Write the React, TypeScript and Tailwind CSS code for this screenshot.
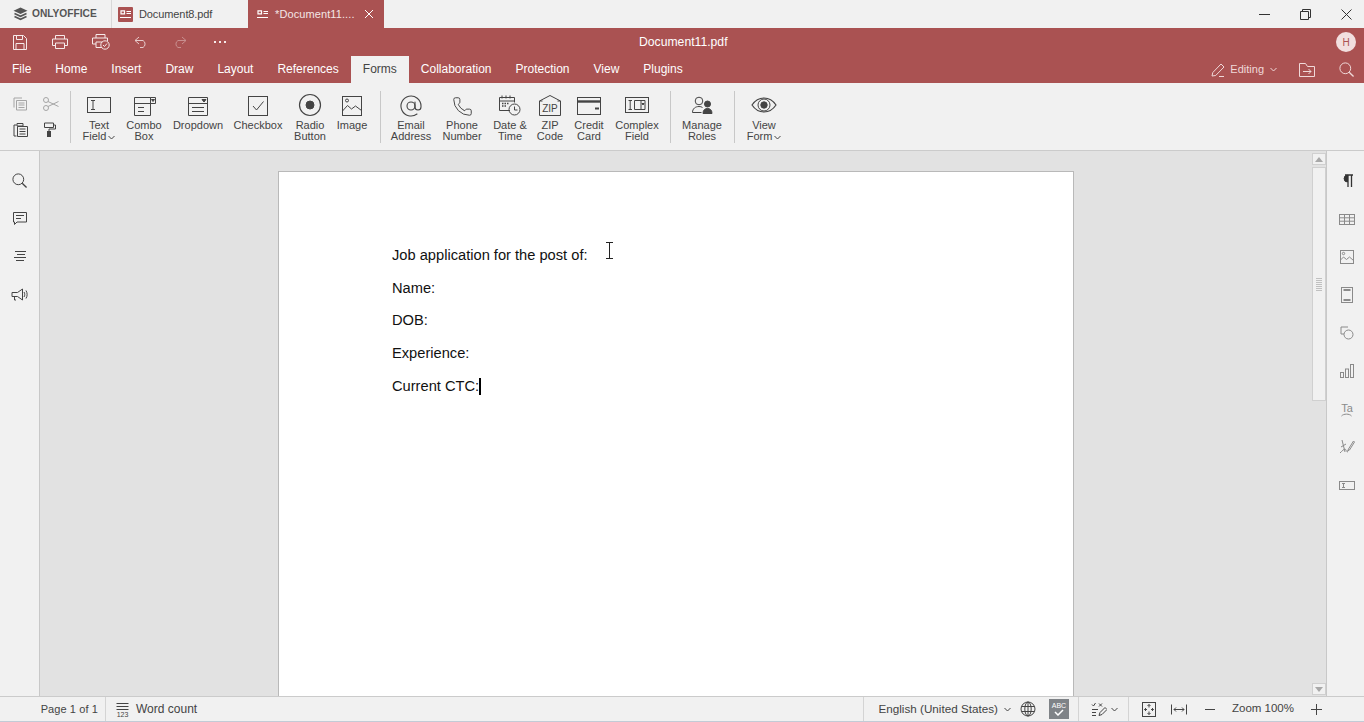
import React from "react";
import { AtSign, Phone } from "lucide-react";

const font = { fontFamily: '"Liberation Sans", Arial, sans-serif' };

// thin-stroke svg wrapper, coordinates are in px
const Ico = ({ w = 30, h = 26, className = "", children }: { w?: number; h?: number; className?: string; children: React.ReactNode }) => (
  <svg width={w} height={h} viewBox={`0 0 ${w} ${h}`} fill="none" stroke="currentColor" strokeWidth="1" className={className}>
    {children}
  </svg>
);

const Search = ({ s = 16 }: { s?: number }) => (
  <Ico w={s} h={s}>
    <circle cx={s * 0.42} cy={s * 0.42} r={s * 0.36} />
    <path d={`M${s * 0.68} ${s * 0.68}L${s * 0.97} ${s * 0.97}`} strokeWidth="1.3" />
  </Ico>
);

const Chevron = () => (
  <svg width="7" height="5" viewBox="0 0 7 5" fill="none" stroke="currentColor" className="shrink-0">
    <path d="M.5 1l3 3 3-3" />
  </svg>
);

const FormGlyph = ({ color }: { color: string }) => (
  <svg width="11" height="9" viewBox="0 0 11 9" fill="none" stroke={color} strokeWidth="1.2">
    <path d="M1 .8h3.500v3H1zM6.500 1.500H11M6.500 3.500H11M0 7.500h11" />
  </svg>
);

const tools = [
  {
    w: "w-[46px]", lines: ["Text", "Field"], caret: true,
    icon: <Ico><rect x="3.500" y="4.500" width="23" height="15" /><path d="M7 7.500h4M7 16.500h4M9 7.500v9" /></Ico>,
  },
  {
    w: "w-[44px]", lines: ["Combo", "Box"],
    icon: <Ico><path d="M5.500 4.500h16v18h-16zM21.500 4.500h5v6h-5zM5.500 10.500h16M9 14.500h6M9 18.500h6" /><path d="M22.500 6.500h3l-1.500 2z" fill="currentColor" /></Ico>,
  },
  {
    w: "w-[64px]", lines: ["Dropdown"],
    icon: <Ico><path d="M5.500 4.500h19v18h-19zM5.500 10.500h19M9 14.500h12M9 18.500h12" /><path d="M19 6.500h4l-2 2.500z" fill="currentColor" /></Ico>,
  },
  {
    w: "w-[56px]", lines: ["Checkbox"],
    icon: <Ico><rect x="5.500" y="3.500" width="19" height="19" /><path d="M10 13l3.500 4 7-8.500" /></Ico>,
  },
  {
    w: "w-[48px]", lines: ["Radio", "Button"],
    icon: <Ico><circle cx="15" cy="12" r="10.500" strokeWidth="1.200" /><circle cx="15" cy="12" r="4" fill="currentColor" /></Ico>,
  },
  {
    w: "w-[36px]", lines: ["Image"],
    icon: <Ico><rect x="5.500" y="3.500" width="19" height="19" /><circle cx="10" cy="7.500" r="1.500" /><path d="M5.500 18l5-5.500 4 3.500 4-3 6 4.500" /></Ico>,
  },
  { divider: "w-[10px]" },
  {
    w: "w-[42px]", lines: ["Email", "Address"],
    icon: <AtSign size={24} strokeWidth={1.1} />,
  },
  {
    w: "w-[60px]", lines: ["Phone", "Number"],
    icon: <Phone size={21} strokeWidth={1.1} />,
  },
  {
    w: "w-[36px]", lines: ["Date &", "Time"],
    icon: (
      <Ico>
        <path d="M15 17.500H4.500v-13h15v5" />
        <path d="M4.500 8h15M7 2.500v3M11 2.500v3M15 2.500v3" />
        <path d="M7 10.500h7M7 13h5" strokeDasharray="1.500 1" strokeWidth="1.500" />
        <circle cx="19.500" cy="16.500" r="5.500" />
        <path d="M19.500 13.500v3.500h3" />
      </Ico>
    ),
  },
  {
    w: "w-[44px]", lines: ["ZIP", "Code"],
    icon: (
      <Ico>
        <path d="M4.500 8l10.500-5.500 10.500 5.500v14.500h-21zM4.500 8h3M25.500 8h-3" />
        <text x="15" y="19" textAnchor="middle" fontSize="10" fill="currentColor" stroke="none" style={font}>ZIP</text>
      </Ico>
    ),
  },
  {
    w: "w-[34px]", lines: ["Credit", "Card"],
    icon: <Ico><rect x="3.500" y="4.500" width="23" height="17" /><path d="M3.500 8.500h23" strokeWidth="2.400" /><path d="M21 15.500h4" strokeWidth="2" /></Ico>,
  },
  {
    w: "w-[62px]", lines: ["Complex", "Field"],
    icon: (
      <Ico>
        <rect x="3.500" y="4.500" width="23" height="15" />
        <path d="M6.500 7.500h3.500M6.500 16.500h3.500M8.200 7.500v9M12.500 7.500h10.500v9H12.500zM19 7.500v9" />
        <path d="M20 10.500h2l-1 1.500z" fill="currentColor" />
      </Ico>
    ),
  },
  { divider: "w-[2px]" },
  {
    w: "w-[44px]", lines: ["Manage", "Roles"],
    icon: (
      <Ico>
        <circle cx="12" cy="8" r="3.800" />
        <path d="M5.500 19.500c0-4 3-6 6.500-6 1.500 0 2.500.3 3.500 1M5.500 19.500h9" />
        <circle cx="20.500" cy="11" r="3" fill="currentColor" />
        <path d="M16 20.500c0-3.500 2-5 4.500-5s4.500 1.500 4.500 5z" fill="currentColor" />
      </Ico>
    ),
  },
  { divider: "w-[10px]" },
  {
    w: "w-[40px]", lines: ["View", "Form"], caret: true,
    icon: (
      <Ico>
        <path d="M3 12c3-4.500 7-7 12-7s9 2.500 12 7c-3 4.500-7 7-12 7s-9-2.500-12-7z" strokeWidth="1.200" />
        <circle cx="15" cy="12" r="6" />
        <circle cx="15" cy="12" r="3.200" fill="currentColor" />
      </Ico>
    ),
  },
];

const menu = ["File", "Home", "Insert", "Draw", "Layout", "References", "Forms", "Collaboration", "Protection", "View", "Plugins"];

const leftIcons = [
  <Search s={15} />,
  <Ico w={16} h={15}><path d="M1.500 1.500h13v9.500H5l-2.500 2.500V11h-1zM4 4.500h8M4 7.500h5" /></Ico>,
  <Ico w={14} h={13}><path d="M2 1.500h11M4 4.500h8M1 7.500h12M3 10.500h8" /></Ico>,
  <Ico w={17} h={15}>
    <path d="M1 5.500h5.500L11.500 2v11L6.500 9.500H1zM3.500 9.500v3.500h1.500" />
    <path d="M13 5c1 1.500 1 3.500 0 5M15 3.500c1.500 2.500 1.500 5.500 0 8" />
  </Ico>,
];

const rightIcons = [
  <Ico w={14} h={14}><path d="M8 1v12M11.500 1v12M5 1h8" strokeWidth="1.300" /><path d="M7.500 1.200a3.300 3.300 0 0 0 0 6.800z" fill="currentColor" /></Ico>,
  <Ico w={16} h={11}><rect x=".5" y=".5" width="15" height="10" /><path d="M.5 3.800h15M.5 7.200h15M5.500 .5v10M10.500 .5v10" /></Ico>,
  <Ico w={14} h={14}><rect x=".5" y=".5" width="13" height="13" /><circle cx="3.500" cy="3.500" r="1.200" /><path d="M.5 10l3-3 3 2.500 3-2.500 4 3.500" /></Ico>,
  <Ico w={12} h={16}><rect x=".5" y=".5" width="11" height="15" /><path d="M2.500 3h7M2.500 13h7" strokeWidth="2" /></Ico>,
  <Ico w={14} h={14}><path d="M8 1H1v7h3" /><circle cx="8.500" cy="8.500" r="4.500" /></Ico>,
  <Ico w={14} h={14}><rect x=".5" y="8.500" width="3" height="5" /><rect x="5.500" y="5" width="3" height="8.500" /><rect x="10.500" y=".5" width="3" height="13" /></Ico>,
  <Ico w={16} h={16}>
    <text x="8" y="10.500" textAnchor="middle" fontSize="11" fill="currentColor" stroke="none" style={font}>Ta</text>
    <path d="M2.500 15c2-2.500 8-2.500 10 0" />
  </Ico>,
  <Ico w={16} h={16}><path d="M3 1l3 12M7 5L2 8M1 14c2-2 4-4 5-4s1 3 3 3M9.500 10l5-8 1 1-5 8-1.800 1z" /></Ico>,
  <Ico w={16} h={9}><rect x=".5" y=".5" width="15" height="8" /><path d="M3 2.500h3M3 6.500h3M4.500 2.500v4" /></Ico>,
];

const docLines = ["Job application for the post of:", "Name:", "DOB:", "Experience:"];

function ToolbarDivider() {
  return <div className="h-[52px] w-px shrink-0 self-start mt-[8px] bg-[#c8c8c8]" />;
}

export default function App() {
  return (
    <div className="flex h-[722px] w-[1364px] flex-col overflow-hidden bg-[#f1f1f1] text-[12px] text-[#444]" style={font}>
      {/* TITLE TABS */}
      <div className="flex h-[28px] shrink-0 items-center">
        <div className="flex h-full w-[112px] items-center border-r border-[#d8d8d8] pl-[13px] text-[#555]">
          <Ico w={15} h={14} className="shrink-0">
            <path d="M7.500 .5l7 3.200-7 3.200-7-3.200z" fill="currentColor" stroke="none" />
            <path d="M1.500 6.500l6 2.800 6-2.800M1.500 9.500l6 2.800 6-2.800" strokeWidth="1.600" />
          </Ico>
          <span className="ml-[4px] text-[10.200px] font-bold">ONLYOFFICE</span>
        </div>
        <div className="flex h-full w-[136px] items-center pl-[6px]">
          <span className="flex h-[15px] w-[15px] items-center justify-center rounded-[1px] bg-[#aa5252]">
            <FormGlyph color="#fff" />
          </span>
          <span className="ml-[6px] text-[11px] tracking-[-0.1px]">Document8.pdf</span>
        </div>
        <div className="flex h-full w-[136px] items-center bg-[#aa5252] pl-[9px] text-[#f4e6e6]">
          <FormGlyph color="#fff" />
          <span className="ml-[7px] text-[11px] tracking-[0.1px]">*Document11....</span>
          <svg width="10" height="10" viewBox="0 0 10 10" stroke="#fff" className="ml-[9px]"><path d="M1 1l8 8M9 1l-8 8" /></svg>
        </div>
        <div className="ml-auto flex items-center text-[#333]">
          <svg width="11" height="3" viewBox="0 0 11 3" stroke="currentColor" className="mr-[30px]"><path d="M0 1.500h11" /></svg>
          <Ico w={11} h={11} className="mr-[30px]"><path d="M.5 2.500h8v8h-8zM2.500 2.500v-2h8v8h-2" /></Ico>
          <svg width="11" height="11" viewBox="0 0 11 11" stroke="currentColor" className="mr-[12px]"><path d="M.5.5l10 10M10.500 .5l-10 10" /></svg>
        </div>
      </div>

      {/* HEADER */}
      <div className="flex h-[55px] shrink-0 flex-col bg-[#aa5252] text-[#f6eaea]">
        <div className="relative flex h-[28px] items-center">
          <div className="ml-[13px] flex items-center gap-[24px]">
            <Ico w={14} h={15}><path d="M.5.5h10l3 3v11H.5zM3.500 .5v4h6v-4M3 14.500V8.500h8v6" /></Ico>
            <Ico w={16} h={14} className="ml-[1px]"><path d="M3.500 4V.5h9V4M3.500 10.500H.5V4h15v6.500h-3M3.500 8h9v5.500h-9z" /></Ico>
            <Ico w={18} h={16}>
              <path d="M4 4V.5h9V4M4 10H.5V4h15v3M4 8h6v5.500H4z" />
              <circle cx="13" cy="11" r="4.200" fill="#aa5252" />
              <path d="M11 11l1.500 1.500 2.500-3" />
            </Ico>
            <Ico w={14} h={12} className="opacity-80"><path d="M5 1L1 4.500 5 8M1 4.500h8a4 4 0 0 1 0 7H6" /></Ico>
            <Ico w={14} h={12} className="ml-[1px] opacity-40"><path d="M9 1l4 3.500L9 8M13 4.500H5a4 4 0 0 0 0 7h3" /></Ico>
            <span className="ml-[3px] flex gap-[3px]">
              <i className="h-[2px] w-[2px] bg-[#f6eaea]" />
              <i className="h-[2px] w-[2px] bg-[#f6eaea]" />
              <i className="h-[2px] w-[2px] bg-[#f6eaea]" />
            </span>
          </div>
          <span className="absolute left-[639px] text-[12.200px] text-white">Document11.pdf</span>
          <span className="ml-auto mr-[8px] flex h-[20px] w-[20px] items-center justify-center rounded-full bg-[#f2dfdf] text-[10px] text-[#aa5252]">H</span>
        </div>
        <div className="flex h-[27px] items-stretch">
          {menu.map((m) =>
            m === "Forms" ? (
              <span key={m} className="flex items-center bg-[#f1f1f1] px-[12px] pb-[1px] text-[#444]">{m}</span>
            ) : (
              <span key={m} className="flex items-center px-[12px] pb-[1px] text-white">{m}</span>
            )
          )}
          <div className="ml-auto flex items-center text-[#f0d9d9]">
            <Ico w={14} h={14}><path d="M1 13l.8-3.500L10 1l3 3-8.300 8.500zM8 13.500h5" /></Ico>
            <span className="ml-[5px] text-[11px]">Editing</span>
            <span className="ml-[6px]"><Chevron /></span>
            <Ico w={16} h={14} className="ml-[22px]"><path d="M.5 13.500V.5h6l2 3h7v10zM4 8.500h8M9.500 6l2.500 2.500L9.500 11" /></Ico>
            <span className="ml-[24px] mr-[10px]"><Search s={15} /></span>
          </div>
        </div>
      </div>

      {/* TOOLBAR */}
      <div className="flex h-[68px] shrink-0 border-b border-[#cbcbcb]">
        <div className="grid h-full w-[70px] shrink-0 grid-cols-[30px_27px] content-start gap-y-[11px] pl-[13px] pt-[14px]">
          <Ico w={15} h={14} className="text-[#a5a5a5]"><path d="M1 10.500V1h8M3.500 13V3.500h10V13zM5.500 6h6M5.500 8h6M5.500 10.500h6" /></Ico>
          <Ico w={16} h={14} className="text-[#a5a5a5]"><circle cx="3" cy="3" r="2.500" /><circle cx="3" cy="11" r="2.500" /><path d="M5 4.500l10.500 5M5 9.500L15.500 4.500" /></Ico>
          <Ico w={15} h={15}><path d="M3.500 3H1v11h2.500M4 1.500h6V4H4zM4.500 4.500h10V14.500h-10zM6.500 7h6M6.500 9.500h6M6.500 12h6" /></Ico>
          <Ico w={14} h={15}><path d="M1.500 1h9v4.500h-9zM10.500 3h2v4H6v2.500" /><rect x="4.500" y="9.500" width="3" height="5" fill="currentColor" /></Ico>
        </div>
        <ToolbarDivider />
        <div className="w-[5px] shrink-0" />
        {tools.map((t, i) =>
          t.divider ? (
            <React.Fragment key={i}>
              <div className={`${t.divider} shrink-0`} />
              <ToolbarDivider />
              <div className="w-[9px] shrink-0" />
            </React.Fragment>
          ) : (
            <div key={i} className={`${t.w} flex shrink-0 flex-col items-center pt-[10px]`}>
              <div className="flex h-[26px] items-center justify-center text-[#444]">{t.icon}</div>
              <div className="mt-[1px] flex flex-col items-center text-[11px] leading-[11px] text-[#444]">
                {t.lines!.map((l, j) => (
                  <span key={l} className="flex items-center whitespace-nowrap">
                    {l}
                    {t.caret && j === 1 && <span className="ml-[2px] mt-[2px]"><Chevron /></span>}
                  </span>
                ))}
              </div>
            </div>
          )
        )}
      </div>

      {/* MAIN */}
      <div className="flex min-h-0 flex-1">
        <div className="flex w-[40px] shrink-0 flex-col items-center border-r border-[#c8c8c8] pt-[10px] text-[#444]">
          {leftIcons.map((ic, i) => (
            <div key={i} className="flex h-[38px] items-center justify-center">{ic}</div>
          ))}
        </div>
        <div className="flex min-w-0 flex-1 bg-[#e2e2e2]">
          <div className="relative ml-[238px] mt-[20px] h-[525px] w-[796px] shrink-0 border-x border-t border-[#b9b9b9] bg-white pl-[113px] pt-[67px] text-[14.670px] leading-[32.700px] text-[#111]">
            {docLines.map((l) => (
              <div key={l}>{l}</div>
            ))}
            <div className="flex items-center">
              Current CTC:
              <span className="inline-block h-[17px] w-[2px] bg-black" />
            </div>
            {/* mouse cursor */}
            <svg width="9" height="17" viewBox="0 0 9 17" fill="none" stroke="#222" className="absolute left-[326px] top-[70px]">
              <path d="M1 .5h7M1 16.500h7M4.500 .5v16" />
            </svg>
          </div>
          <div className="ml-[238px] flex w-[14px] shrink-0 flex-col pt-[2px] pb-[1px]">
            <div className="flex h-[12px] items-center justify-center border border-[#d0d0d0] bg-[#f1f1f1]">
              <svg width="8" height="5" viewBox="0 0 8 5"><path d="M4 0l4 5H0z" fill="#a8a8a8" /></svg>
            </div>
            <div className="mt-[2px] flex h-[234px] items-center justify-center border border-[#d0d0d0] bg-[#f1f1f1] pt-[1px]">
              <div className="h-[13px] w-[6px] bg-[repeating-linear-gradient(to_bottom,#c0c0c0_0,#c0c0c0_1px,transparent_1px,transparent_2px)]" />
            </div>
            <div className="mt-auto flex h-[12px] items-center justify-center border border-[#d0d0d0] bg-[#f1f1f1]">
              <svg width="8" height="5" viewBox="0 0 8 5"><path d="M0 0h8L4 5z" fill="#a8a8a8" /></svg>
            </div>
          </div>
        </div>
        <div className="flex w-[38px] shrink-0 flex-col items-center border-l border-[#c8c8c8] pl-[3px] pt-[11px] text-[#8a8a8a]">
          {rightIcons.map((ic, i) => (
            <div key={i} className={`flex h-[38px] items-center justify-center ${i === 0 ? "text-[#333]" : ""}`}>{ic}</div>
          ))}
        </div>
      </div>

      {/* STATUS BAR */}
      <div className="flex h-[26px] shrink-0 items-center border-y border-t-[#cbcbcb] border-b-[#c3cbd6]">
        <div className="flex h-full w-[106px] items-center justify-end border-r border-[#d4d4d4] pr-[7px] text-[11px] tracking-[0.1px]">Page 1 of 1</div>
        <Ico w={13} h={15} className="ml-[10px]">
          <path d="M.5 1.500h12M.5 4.500h12M.5 7.500h12" />
          <text x="6.500" y="14.500" textAnchor="middle" fontSize="7" fill="currentColor" stroke="none" style={font}>123</text>
        </Ico>
        <span className="ml-[7px]">Word count</span>
        <div className="ml-auto flex h-full items-center border-l border-[#d4d4d4] pl-[14px]">
          <span className="whitespace-nowrap text-[11.700px]">English (United States)</span>
          <span className="ml-[6px]"><Chevron /></span>
          <Ico w={16} h={16} className="ml-[9px]">
            <circle cx="8" cy="8" r="7" />
            <ellipse cx="8" cy="8" rx="3.200" ry="7" />
            <path d="M8 1v14M1.500 5.500h13M1.500 10.500h13" />
          </Ico>
          <span className="ml-[13px] flex h-[20px] w-[20px] flex-col items-center justify-center bg-[#7f8387] text-[7px] leading-[7px] text-white">
            ABC
            <svg width="11" height="7" viewBox="0 0 11 7" fill="none" stroke="#fff" strokeWidth="1.500"><path d="M2 3l3 3 5-5" /></svg>
          </span>
        </div>
        <div className="ml-[9px] flex h-full items-center border-l border-[#d4d4d4] pl-[12px]">
          <Ico w={16} h={15}>
            <path d="M1 2.500l1.500 1.500 2-3M8 1.500l3 3M11 1.500l-3 3M1 7.500h6M1 10.500h4M1 13.500h4M8 13.500l1-3 5-5 2 2-5 5z" />
          </Ico>
          <span className="ml-[4px] mr-[10px]"><Chevron /></span>
        </div>
        <div className="flex h-full items-center border-l border-[#d4d4d4] pl-[13px]">
          <Ico w={14} h={15}>
            <rect x=".5" y=".5" width="13" height="14" />
            <path d="M7 2.500v3M5.500 4L7 2.500 8.500 4M7 12.500v-3M5.500 11L7 12.500 8.500 11M2.500 7.500h2.500M4 6L2.500 7.500 4 9M11.500 7.500H9M10 6l1.500 1.500L10 9" />
          </Ico>
          <Ico w={16} h={11} className="ml-[15px]"><path d="M.5 .5v10M15.500 .5v10M3 5.500h10M5 3.500l-2 2 2 2M11 3.500l2 2-2 2" /></Ico>
          <svg width="10" height="1" viewBox="0 0 10 1" stroke="currentColor" className="ml-[18px]"><path d="M0 .5h10" /></svg>
          <span className="ml-[17px] whitespace-nowrap text-[11.500px]">Zoom 100%</span>
          <Ico w={11} h={11} className="ml-[17px] mr-[42px]"><path d="M0 5.500h11M5.500 0v11" /></Ico>
        </div>
      </div>
    </div>
  );
}
